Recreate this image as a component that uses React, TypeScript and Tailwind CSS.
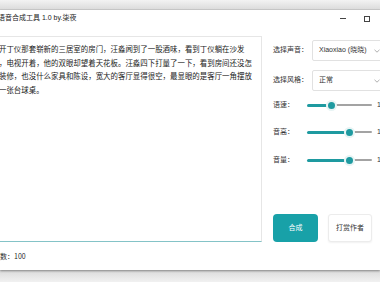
import React from "react";

const font = "font-['Liberation_Sans','Noto_Sans_CJK_SC',sans-serif]";

function Select({ value }: { value: string }) {
  return (
    <div className="flex h-[21px] w-[76px] shrink-0 items-center justify-between rounded-[2px] border border-[#e1e1e1] bg-white pl-[6px] pr-[7px] text-[7px] text-[#333]">
      <span className="whitespace-nowrap">{value}</span>
      <svg width="6" height="4" viewBox="0 0 6 4" className="ml-1 shrink-0">
        <path d="M0.5 0.8 L3 3.2 L5.5 0.8" fill="none" stroke="#9a9a9a" strokeWidth="0.8" />
      </svg>
    </div>
  );
}

function Slider({ label, pos, value }: { label: string; pos: number; value: string }) {
  return (
    <div className="flex h-[14px] items-center">
      <span className="w-[34px] shrink-0 text-[7px] text-[#333]">{label}</span>
      <div className="relative h-[14px] w-[65px] shrink-0">
        <div className="absolute left-0 top-[6px] h-[2.5px] rounded-full bg-[#1e9aa0]" style={{ width: pos - 4 }} />
        <div className="absolute right-0 top-[6.25px] h-[2px] rounded-full bg-[#a3a3a3]" style={{ left: pos + 5 }} />
        <div
          className="absolute top-[1.5px] flex h-[11px] w-[11px] items-center justify-center rounded-full bg-[#e8f4f4]"
          style={{ left: pos - 5.5 }}
        >
          <div className="h-[7px] w-[7px] rounded-full bg-[#1e9aa0]" />
        </div>
      </div>
      <span className="ml-[5px] whitespace-nowrap text-[7px] text-[#333]">{value}</span>
    </div>
  );
}

export default function App() {
  return (
    <div className={`flex h-[282px] w-[380px] flex-col overflow-hidden bg-[#e9e9e9] ${font}`}>
      {/* backdrop above window */}
      <div className="h-[10px] shrink-0 border-b border-[#cbcbcb] bg-gradient-to-b from-[#f3f3f3] to-[#dcdcdc]" />

      {/* window */}
      <div className="relative z-10 flex h-[260px] shrink-0 flex-col bg-white shadow-[0_1px_2px_rgba(0,0,0,0.4)]">
        {/* title bar */}
        <div className="flex h-[17px] shrink-0 items-center justify-between">
          <span className="ml-[-2px] whitespace-nowrap text-[7px] text-[#222]">语音合成工具 1.0 by.柒夜</span>
          <div className="flex items-center">
            <div className="h-[0.8px] w-[6px] bg-[#444]" />
            <div className="ml-[18px] mr-[10px] h-[6px] w-[6px] border-[0.8px] border-[#444]" />
          </div>
        </div>

        <div className="flex flex-1">
          {/* left: text + count */}
          <div className="flex w-[262px] shrink-0 flex-col">
            <div className="ml-[-12px] mt-[9px] h-[206px] w-[274px] border-r border-t border-[#e6e6e6] border-b-[1.5px] border-b-[#84c3c7]">
              <p className="whitespace-nowrap pl-[11px] pt-[5px] text-[7.45px] leading-[13.5px] text-[#222] font-['Noto_Sans_CJK_SC',sans-serif]">
                开丁仪那套崭新的三居室的房门，汪淼闻到了一股酒味，看到丁仪躺在沙发
                <br />
                ，电视开着，他的双眼却望着天花板。汪淼四下打量了一下，看到房间还没怎
                <br />
                装修，也没什么家具和陈设，宽大的客厅显得很空，最显眼的是客厅一角摆放
                <br />
                一张台球桌。
              </p>
            </div>
            <div className="flex flex-1 items-center">
              <span className="ml-[-7px] whitespace-nowrap text-[7px] text-[#2a2a2a] font-['Noto_Sans_CJK_SC',sans-serif]">字数：100</span>
            </div>
          </div>

          {/* right: settings */}
          <div className="flex flex-col pl-[11px]">
            <div className="mt-[13px] flex items-center">
              <span className="w-[39px] shrink-0 text-[7px] text-[#333]">选择声音：</span>
              <Select value="Xiaoxiao (晓晓)" />
            </div>
            <div className="mt-[9px] flex items-center">
              <span className="w-[39px] shrink-0 text-[7px] text-[#333]">选择风格：</span>
              <Select value="正常" />
            </div>
            <div className="mt-[7px]">
              <Slider label="语速：" pos={24} value="1.0" />
            </div>
            <div className="mt-[13px]">
              <Slider label="音高：" pos={42} value="1.0" />
            </div>
            <div className="mt-[14px]">
              <Slider label="音量：" pos={42} value="100" />
            </div>
            <div className="mt-[47px] flex">
              <button className="flex h-[28px] w-[45px] items-center justify-center rounded-[4px] bg-[#18a1a8] text-[7px] text-white">
                合成
              </button>
              <button className="ml-[10px] flex h-[28px] w-[44px] items-center justify-center rounded-[3px] border border-[#ececec] bg-white text-[7px] text-[#333] shadow-[0_1px_2px_rgba(0,0,0,0.06)]">
                打赏作者
              </button>
            </div>
          </div>
        </div>
      </div>

      {/* backdrop below window */}
      <div className="flex-1 bg-gradient-to-b from-[#dadada] to-[#f1f1f1]" />
    </div>
  );
}
